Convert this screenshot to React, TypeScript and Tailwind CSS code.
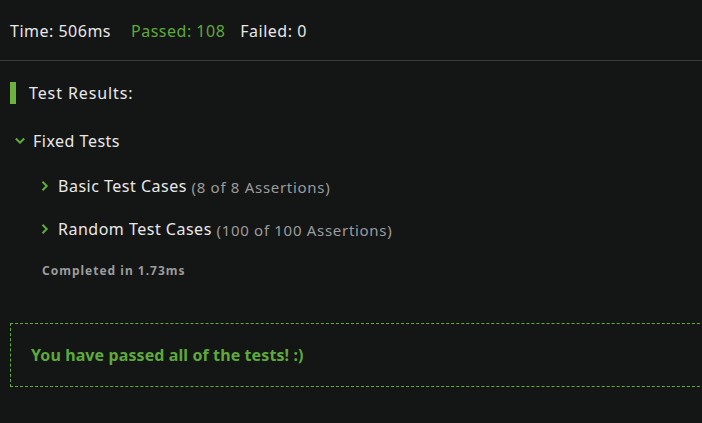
import React from "react";

const Chevron = ({ down }: { down?: boolean }) => (
  <svg width="10" height="10" viewBox="0 0 10 10" className="shrink-0">
    {down ? (
      <path d="M0.8 2.5 L5 6.7 L9.2 2.5" fill="none" stroke="#5fae3c" strokeWidth="2" />
    ) : (
      <path d="M2.5 0.8 L6.7 5 L2.5 9.2" fill="none" stroke="#5fae3c" strokeWidth="2" />
    )}
  </svg>
);

export default function App() {
  return (
    <div
      className="w-[702px] h-[423px] overflow-hidden bg-[#141515] text-[#e8e8e8]"
      style={{ fontFamily: '"Noto Sans", sans-serif' }}
    >
      <div className="h-[61px] border-b border-[#3a3b3b] flex items-center pl-[10px] text-[16px] tracking-[0.5px] pt-[1px]">
        <span>Time: 506ms</span>
        <span className="ml-[20px] text-[#5ea93b]">Passed: 108</span>
        <span className="ml-[15px]">Failed: 0</span>
      </div>
      <div className="pl-[10px] pt-[20px] flex items-center">
        <div className="w-[6px] h-[22px] bg-[#6cb23f]" />
        <span className="ml-[13px] text-[16px] tracking-[0.9px]">Test Results:</span>
      </div>
      <div className="pl-[15px] mt-[24px] flex items-center gap-[8px] text-[16px] tracking-[0.5px]">
        <Chevron down />
        <span>Fixed Tests</span>
      </div>
      <div className="pl-[40px] mt-[21px] flex items-center gap-[8px] text-[16px] tracking-[0.5px]">
        <Chevron />
        <span>
          Basic Test Cases{" "}
          <span className="text-[15px] tracking-[0.7px] text-[#9b9c9c] relative top-[1px]">(8 of 8 Assertions)</span>
        </span>
      </div>
      <div className="pl-[40px] mt-[19px] flex items-center gap-[8px] text-[16px] tracking-[0.5px]">
        <Chevron />
        <span>
          Random Test Cases{" "}
          <span className="text-[15px] tracking-[0.7px] text-[#9b9c9c] relative top-[1px]">(100 of 100 Assertions)</span>
        </span>
      </div>
      <div className="pl-[42px] mt-[21px] text-[12px] font-bold tracking-[1px] text-[#9b9c9c]">Completed in 1.73ms</div>
      <div className="ml-[10px] mt-[43px] w-[720px] h-[64px] border border-dashed border-[#5fae3c] flex items-center pl-[20px]">
        <span className="text-[16px] font-bold tracking-[0.1px] text-[#5ea93b]">You have passed all of the tests! :)</span>
      </div>
    </div>
  );
}
